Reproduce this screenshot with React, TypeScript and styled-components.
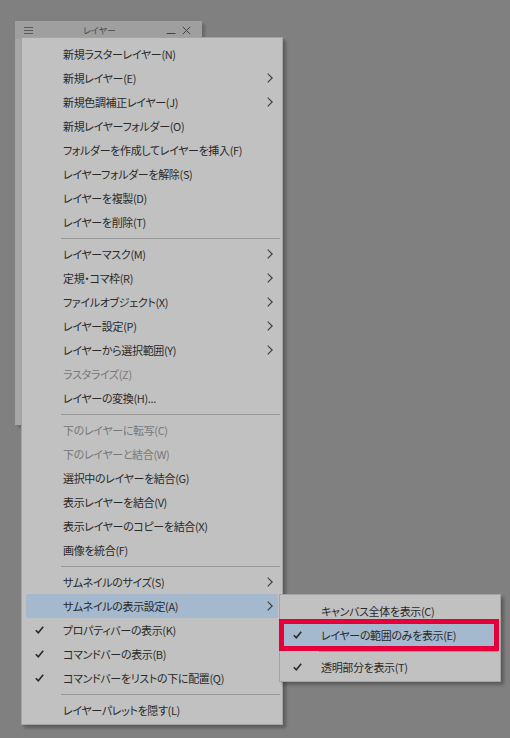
import React from "react";
import styled, { createGlobalStyle } from "styled-components";

const Global = createGlobalStyle`
  html, body { margin: 0; padding: 0; background: #808080; }
  body { font-family: "Noto Sans CJK JP", "Noto Sans", sans-serif; }
`;

const Desk = styled.div`
  position: relative;
  width: 510px;
  height: 738px;
  overflow: hidden;
  background: #808080;
`;

const BackPanel = styled.div`
  position: absolute;
  left: 15px;
  top: 21px;
  width: 187px;
  height: 404px;
  background: #a6a6a6;
  box-shadow: 3px 3px 2px rgba(0, 0, 0, 0.18);
  display: flex;
  flex-direction: column;
`;

const TitleBar = styled.div`
  height: 18px;
  background: #9f9f9f;
  display: grid;
  grid-template-columns: 30px 1fr 36px;
  align-items: center;
  color: #4a4a4a;
`;

const Title = styled.span`
  font-size: 9px;
  text-align: center;
  padding-right: 12px;
  font-feature-settings: "palt";
`;

const TitleIcons = styled.div`
  display: flex;
  align-items: center;
  gap: 6px;
`;

const Menu = styled.div<{ $left: number; $top: number; $width: number }>`
  position: absolute;
  left: ${(p) => p.$left}px;
  top: ${(p) => p.$top}px;
  width: ${(p) => p.$width}px;
  box-sizing: border-box;
  background: #c1c1c1;
  border: 1px solid #a3a3a3;
  box-shadow: 3px 3px 3px rgba(0, 0, 0, 0.28);
  padding: 4px 0 2px;
  display: flex;
  flex-direction: column;
`;

const Item = styled.div<{ $active?: boolean; $disabled?: boolean }>`
  height: 24px;
  margin: 0 4px;
  border-radius: 2px;
  display: grid;
  grid-template-columns: 37px 1fr 20px;
  align-items: center;
  background: ${(p) => (p.$active ? "#a4b8ce" : "transparent")};
  color: ${(p) => (p.$disabled ? "#787878" : "#2a2a2a")};
  font-size: 11px;
  letter-spacing: -0.35px;
  font-feature-settings: "palt";
  white-space: nowrap;
  position: relative;
`;

const CheckCell = styled.span`
  padding-left: 9px;
  display: flex;
  align-items: center;
`;

const ArrowCell = styled.span`
  display: flex;
  justify-content: flex-end;
  padding-right: 5px;
  color: #3a3a3a;
`;

const Separator = styled.div`
  height: 8px;
  margin: 0 2px 0 39px;
  display: flex;
  align-items: center;
  &::after {
    content: "";
    flex: 1;
    height: 1px;
    background: #979797;
  }
`;

const RedFrame = styled.div`
  position: absolute;
  left: -5px;
  right: -3px;
  top: -4px;
  bottom: -4px;
  border: 5px solid #e5003b;
  pointer-events: none;
`;

const Check = () => (
  <svg width="9" height="8" viewBox="0 0 9 8">
    <path d="M0.8 4.2 L3.3 6.8 L8.2 0.8" fill="none" stroke="#2a2a2a" strokeWidth="1.6" />
  </svg>
);

const Chevron = () => (
  <svg width="6" height="10" viewBox="0 0 6 10">
    <path d="M0.7 0.7 L5.2 5 L0.7 9.3" fill="none" stroke="#3a3a3a" strokeWidth="1.1" />
  </svg>
);

type Entry =
  | { sep: true }
  | { sep?: false; label: string; sub?: boolean; check?: boolean; disabled?: boolean; active?: boolean; frame?: boolean };

const mainItems: Entry[] = [
  { label: "新規ラスターレイヤー(N)" },
  { label: "新規レイヤー(E)", sub: true },
  { label: "新規色調補正レイヤー(J)", sub: true },
  { label: "新規レイヤーフォルダー(O)" },
  { label: "フォルダーを作成してレイヤーを挿入(F)" },
  { label: "レイヤーフォルダーを解除(S)" },
  { label: "レイヤーを複製(D)" },
  { label: "レイヤーを削除(T)" },
  { sep: true },
  { label: "レイヤーマスク(M)", sub: true },
  { label: "定規・コマ枠(R)", sub: true },
  { label: "ファイルオブジェクト(X)", sub: true },
  { label: "レイヤー設定(P)", sub: true },
  { label: "レイヤーから選択範囲(Y)", sub: true },
  { label: "ラスタライズ(Z)", disabled: true },
  { label: "レイヤーの変換(H)..." },
  { sep: true },
  { label: "下のレイヤーに転写(C)", disabled: true },
  { label: "下のレイヤーと結合(W)", disabled: true },
  { label: "選択中のレイヤーを結合(G)" },
  { label: "表示レイヤーを結合(V)" },
  { label: "表示レイヤーのコピーを結合(X)" },
  { label: "画像を統合(F)" },
  { sep: true },
  { label: "サムネイルのサイズ(S)", sub: true },
  { label: "サムネイルの表示設定(A)", sub: true, active: true },
  { label: "プロパティバーの表示(K)", check: true },
  { label: "コマンドバーの表示(B)", check: true },
  { label: "コマンドバーをリストの下に配置(Q)", check: true },
  { sep: true },
  { label: "レイヤーパレットを隠す(L)" },
];

const subItems: Entry[] = [
  { label: "キャンバス全体を表示(C)" },
  { label: "レイヤーの範囲のみを表示(E)", check: true, active: true, frame: true },
  { sep: true },
  { label: "透明部分を表示(T)", check: true },
];

const MenuList = ({ items }: { items: Entry[] }) => (
  <>
    {items.map((it, i) =>
      it.sep ? (
        <Separator key={i} />
      ) : (
        <Item key={i} $active={it.active} $disabled={it.disabled}>
          <CheckCell>{it.check ? <Check /> : null}</CheckCell>
          <span>{it.label}</span>
          <ArrowCell>{it.sub ? <Chevron /> : null}</ArrowCell>
          {it.frame ? <RedFrame /> : null}
        </Item>
      )
    )}
  </>
);

export default function App() {
  return (
    <>
      <Global />
      <Desk>
        <BackPanel>
          <TitleBar>
            <svg width="30" height="18" viewBox="0 0 30 18">
              <path d="M9 6.5h9M9 9.5h9M9 12.5h9" stroke="#5a5a5a" strokeWidth="1" />
            </svg>
            <Title>レイヤー</Title>
            <TitleIcons>
              <svg width="10" height="10" viewBox="0 0 10 10">
                <path d="M0.5 8.5h9" stroke="#444" strokeWidth="1" />
              </svg>
              <svg width="9" height="9" viewBox="0 0 9 9">
                <path d="M0.8 0.8L8.2 8.2M8.2 0.8L0.8 8.2" stroke="#444" strokeWidth="1" />
              </svg>
            </TitleIcons>
          </TitleBar>
        </BackPanel>
        <Menu $left={21} $top={37} $width={262}>
          <MenuList items={mainItems} />
        </Menu>
        <Menu $left={279} $top={594} $width={222}>
          <MenuList items={subItems} />
        </Menu>
      </Desk>
    </>
  );
}
